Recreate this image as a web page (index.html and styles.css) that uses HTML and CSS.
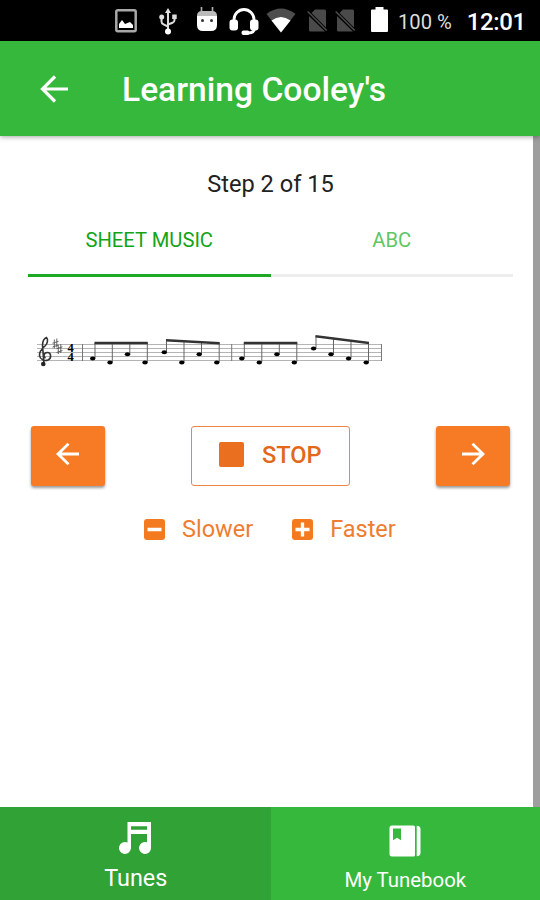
FILE: index.html
```html
<!DOCTYPE html>
<html lang="en">
<head>
    <meta charset="UTF-8">
    <meta name="viewport" content="width=device-width, initial-scale=1.0">
    <title>Learning Cooley's</title>
    <link rel="stylesheet" href="styles.css">
</head>
<body>
    <div class="status-bar">
        <svg class="icon-image" width="22" height="24" viewBox="0 0 22 24">
            <rect x="1.3" y="1.3" width="19.4" height="21" rx="1.5" fill="none" stroke="#a8a8a8" stroke-width="2.5"/>
            <path d="M4 19v-4l3-4 3 4 5-2 3 3v3z" fill="#fff"/>
        </svg>
        <svg class="icon-usb" width="18" height="27" viewBox="0 0 18 27">
            <path d="M9 3v20M2.500 9v4.500q0 2 2 2.800L9 18.500M15.500 8v4q0 2-2 2.800L9 16.500" fill="none" stroke="#ddd" stroke-width="2"/>
            <path d="M9 0l3 5H6zM13.200 6.500h4.500v4.500h-4.500z" fill="#ddd"/>
            <circle cx="2.700" cy="9" r="2.500" fill="#ddd"/>
            <circle cx="9" cy="23.500" r="3" fill="#fff"/>
        </svg>
        <svg class="icon-android" width="22" height="25" viewBox="0 0 22 25">
            <path d="M5.500 0v6M16.500 0v6" stroke="#aaa" stroke-width="1.700"/>
            <path d="M1 9q0-5 5-5h10q5 0 5 5z" fill="#bbb"/>
            <path d="M1 9h20v9q0 6-6 6H7q-6 0-6-6z" fill="#fff"/>
            <circle cx="6.500" cy="13.500" r="1.500" fill="#333"/>
            <circle cx="15.500" cy="13.500" r="1.500" fill="#333"/>
        </svg>
        <svg class="icon-headset" width="30" height="28" viewBox="0 0 30 28">
            <path d="M5 14V11.500a10 10 0 0 1 20 0V14M25.500 18v1.500q0 5.500-6 5.500H16" fill="none" stroke="#fff" stroke-width="2.800"/>
            <rect x="0.500" y="11.500" width="8.500" height="11" rx="3" fill="#fff"/>
            <rect x="21" y="11.500" width="8.500" height="11" rx="3" fill="#fff"/>
            <rect x="12.500" y="22.500" width="8" height="4.500" rx="2" fill="#fff"/>
        </svg>
        <svg class="icon-wifi" width="30" height="25" viewBox="0 0 30 25">
            <path d="M15 24.500L.5 6q14.500-11 29 0z" fill="#4d4d4d"/>
            <path d="M15 24.500L5.500 12.500q9.500-7 19 0z" fill="#fff"/>
        </svg>
        <svg class="icon-sim" width="21" height="24" viewBox="0 0 21 24">
            <path d="M8 .5h9.500q1.500 0 1.500 1.500v16.500L4.500 4zM2 7l16 15.500H3.500Q2 22.500 2 21z" fill="#4a4a4a"/>
            <path d="M.7 2.500l19 19" stroke="#4a4a4a" stroke-width="1.700"/>
        </svg>
        <svg class="icon-sim" width="21" height="24" viewBox="0 0 21 24">
            <path d="M8 .5h9.500q1.500 0 1.500 1.500v16.500L4.500 4zM2 7l16 15.500H3.500Q2 22.500 2 21z" fill="#4a4a4a"/>
            <path d="M.7 2.500l19 19" stroke="#4a4a4a" stroke-width="1.700"/>
        </svg>
        <svg class="icon-battery" width="17" height="26" viewBox="0 0 17 26">
            <path d="M4.500 0h8v2.500H16q1 0 1 1V24q0 1-1 1H1q-1 0-1-1V3.500q0-1 1-1h3.500z" fill="#fff"/>
        </svg>
        <span class="battery-level">100 %</span>
        <span class="clock">12:01</span>
    </div>

    <header>
        <svg class="back" width="28" height="28" viewBox="0 0 28 28">
            <path d="M28 14H2.500M15 1.500L2.500 14 15 26.500" fill="none" stroke="#fff" stroke-width="3.200"/>
        </svg>
        <h1>Learning Cooley's</h1>
    </header>

    <main class="content">
        <p class="step">Step 2 of 15</p>

        <div class="segments">
            <button class="segment active">SHEET MUSIC</button>
            <button class="segment">ABC</button>
        </div>

        <svg class="score" width="346" height="34" viewBox="37 334 346 34">
            <!-- staff and bar lines -->
            <path d="M37 344.500h345M37 348.500h345M37 352.500h345M37 356.500h345M37 360.500h345" stroke="#b4b4b4" stroke-width="1"/>
            <path d="M82.500 344v17M231.700 344v17M381.500 344v17" stroke="#777" stroke-width="1"/>
            <!-- treble clef -->
            <path d="M44 364.500L42.500 345c0-4 2-7 4-7.500c2 2 1 6-1.500 8.500c-4 3.500-6 6-5.500 9.500c.5 4 5 6 8.500 4.500c4-2 3-7.500-.5-7.500c-4 0-4.500 4-2 5.500" fill="none" stroke="#333" stroke-width="1.600"/>
            <circle cx="43.300" cy="364" r="2.300" fill="#222"/>
            <!-- key signature -->
            <path d="M54.300 339.500v9M56.800 338.500v9M52.500 343.300l6-2M52.500 347l6-2M58.300 345v9M60.800 344v9M56.500 348.800l6-2M56.500 352.500l6-2" stroke="#555" stroke-width=".9"/>
            <text class="meter" x="67.500" y="352.300">4</text>
            <text class="meter" x="67.500" y="360.700">4</text>
            <!-- stems -->
            <path d="M95 358v-15M112.300 362v-19M129.800 354v-11M147.300 362v-19M166.500 352v-12M184 362v-21M201.500 354v-12M219.200 362v-19M244.300 358v-15M261.800 362v-19M279.300 354v-11M296.800 362v-19M316 348v-12M333.500 354v-16M351 358v-17M368.500 362v-19" stroke="#666" stroke-width="1"/>
            <!-- beams -->
            <path d="M94.500 341.700h53.300v2.500H94.500zM166 339l53.700 3v2.500L166 341.500zM243.800 341.700h53.500v2.500h-53.500zM315.500 335l53.500 6.700v2.500l-53.500-6.700z" fill="#333"/>
            <!-- note heads -->
            <g fill="#000">
                <ellipse cx="92.700" cy="358.500" rx="2.700" ry="2"/>
                <ellipse cx="110" cy="362.500" rx="2.700" ry="2"/>
                <ellipse cx="127.500" cy="354.300" rx="2.700" ry="2"/>
                <ellipse cx="145" cy="362.500" rx="2.700" ry="2"/>
                <ellipse cx="164.300" cy="352.200" rx="2.700" ry="2"/>
                <ellipse cx="181.800" cy="362.500" rx="2.700" ry="2"/>
                <ellipse cx="199.200" cy="354.300" rx="2.700" ry="2"/>
                <ellipse cx="216.800" cy="362.500" rx="2.700" ry="2"/>
                <ellipse cx="241.800" cy="358.500" rx="2.700" ry="2"/>
                <ellipse cx="259.300" cy="362.500" rx="2.700" ry="2"/>
                <ellipse cx="276.900" cy="354.300" rx="2.700" ry="2"/>
                <ellipse cx="294.300" cy="362.500" rx="2.700" ry="2"/>
                <ellipse cx="313.600" cy="348.500" rx="2.700" ry="2"/>
                <ellipse cx="331" cy="354.300" rx="2.700" ry="2"/>
                <ellipse cx="348.600" cy="358.500" rx="2.700" ry="2"/>
                <ellipse cx="366.200" cy="362.500" rx="2.700" ry="2"/>
            </g>
        </svg>

        <div class="player">
            <button class="nav-btn">
                <svg width="24" height="24" viewBox="0 0 24 24">
                    <path d="M23 12H2M12.500 1.700L2 12l10.500 10.300" fill="none" stroke="#fff" stroke-width="2.800"/>
                </svg>
            </button>
            <button class="stop-btn"><span class="stop-icon"></span>STOP</button>
            <button class="nav-btn">
                <svg width="24" height="24" viewBox="0 0 24 24">
                    <path d="M1 12h21M11.500 1.700L22 12 11.500 22.300" fill="none" stroke="#fff" stroke-width="2.800"/>
                </svg>
            </button>
        </div>

        <div class="speed">
            <button class="speed-btn">
                <svg width="21" height="21" viewBox="0 0 21 21">
                    <rect width="21" height="21" rx="3" fill="#f37a1f"/>
                    <path d="M3.500 10.500h14" stroke="#fff" stroke-width="3.500"/>
                </svg>
                Slower
            </button>
            <button class="speed-btn">
                <svg width="21" height="21" viewBox="0 0 21 21">
                    <rect width="21" height="21" rx="3" fill="#f37a1f"/>
                    <path d="M3.500 10.500h14M10.500 3.500v14" stroke="#fff" stroke-width="3.300"/>
                </svg>
                Faster
            </button>
        </div>
    </main>

    <nav class="tabs">
        <a class="tab selected">
            <svg width="33" height="32" viewBox="0 0 33 32">
                <path d="M8.500 0H32v25.500a6 6 0 1 1-4-5.200V12H12v14a6 6 0 1 1-3.500-5.500zM12 4.300v3.400h16V4.300z" fill="#fff" fill-rule="evenodd"/>
            </svg>
            <span>Tunes</span>
        </a>
        <a class="tab">
            <svg width="32" height="32" viewBox="0 0 32 32">
                <path d="M3 .5h21.500q1.500 0 1.500 1.500v28q0 1.500-1.500 1.500H3Q.5 31.500.5 29V3Q.5.5 3 .5zM4 3.500v11.800l4-2.500 4 2.500V3.500z" fill="#fff" fill-rule="evenodd"/>
                <path d="M27.700.7q3.800.3 3.800 3.300v24q0 3-3.800 3.300z" fill="#fff"/>
            </svg>
            <span>My Tunebook</span>
        </a>
    </nav>
</body>
</html>
```

FILE: styles.css
```css
* {
    margin: 0;
    padding: 0;
    box-sizing: border-box;
}

body {
    display: flex;
    flex-direction: column;
    height: 900px;
    font-family: Roboto, sans-serif;
    background-color: white;
    overflow: hidden;
}

svg {
    display: block;
    flex-shrink: 0;
}

button {
    border: none;
    background: none;
    font-family: inherit;
    cursor: pointer;
}

.status-bar {
    display: flex;
    align-items: flex-start;
    height: 41px;
    padding: 8px 0 0 115px;
    background-color: #000;
    color: white;
    white-space: nowrap;
}

.icon-image {
    margin-top: 1px;
}

.icon-usb {
    margin-left: 22px;
}

.icon-android {
    margin: -1px 0 0 19px;
}

.icon-headset {
    margin-left: 11px;
}

.icon-wifi {
    margin-left: 7px;
}

.icon-sim {
    margin: 1px -4px 0 11px;
}

.icon-battery {
    margin: -1px 0 0 19px;
}

.battery-level {
    margin-left: 10px;
    font-size: 20.2px;
    line-height: 28px;
    color: #ddd;
}

.clock {
    margin-left: 15px;
    font-size: 24px;
    font-weight: 500;
    line-height: 28px;
    letter-spacing: -0.4px;
}

header {
    display: flex;
    align-items: center;
    height: 95px;
    padding-left: 40px;
    background-color: #36b83c;
    box-shadow: 0 1px 5px rgba(0,0,0,0.35);
    z-index: 1;
}

h1 {
    margin: 1px 0 0 54px;
    font-size: 33.6px;
    font-weight: 500;
    color: white;
}

.content {
    flex: 1;
    padding: 31px 20px 0 28px;
    border-right: 7px solid #9e9e9e;
}

.step {
    text-align: center;
    font-size: 23.6px;
    line-height: 34px;
    color: #222;
}

.segments {
    display: flex;
    margin-top: 7px;
}

.segment {
    flex: 1;
    height: 69px;
    padding-bottom: 2px;
    border-bottom: 3px solid #ededed;
    font-size: 20.2px;
    color: #5dc761;
}

.segment.active {
    border-color: #1fa824;
    color: #12a417;
}

.score {
    margin: 57px 0 0 9px;
}

.meter {
    font-family: "Liberation Serif", serif;
    font-size: 12.5px;
    font-weight: bold;
}

.player {
    display: flex;
    justify-content: space-between;
    margin: 58px 3px 0;
}

.nav-btn {
    display: flex;
    justify-content: center;
    width: 74px;
    height: 60px;
    padding-top: 16px;
    border-radius: 3px;
    background-color: #f77b24;
    box-shadow: 0 2px 3px rgba(0,0,0,0.4);
}

.stop-btn {
    display: flex;
    align-items: center;
    width: 159px;
    height: 60px;
    padding: 0 0 3px 27px;
    border: 1px solid #ee8548;
    border-radius: 3px;
    font-size: 23.6px;
    font-weight: 500;
    color: #e2681c;
}

.stop-icon {
    width: 25px;
    height: 25px;
    margin-right: 18px;
    border-radius: 2px;
    background-color: #ea701f;
}

.speed {
    display: flex;
    gap: 39px;
    margin: 27px 0 0 116px;
}

.speed-btn {
    display: flex;
    align-items: center;
    gap: 17px;
    font-size: 23.5px;
    line-height: 32px;
    color: #ee7d30;
}

.tabs {
    display: flex;
    height: 93px;
    background-color: #36b83c;
}

.tab {
    display: flex;
    flex: 1;
    flex-direction: column;
    align-items: center;
    padding-top: 18px;
    font-size: 20.4px;
    color: white;
}

.tab span {
    margin-top: 9px;
    line-height: 29px;
}

.tab.selected {
    padding: 15px 0 0 1px;
    background-color: #30a236;
    font-size: 23.4px;
}

.tab.selected span {
    line-height: 30px;
}
```
